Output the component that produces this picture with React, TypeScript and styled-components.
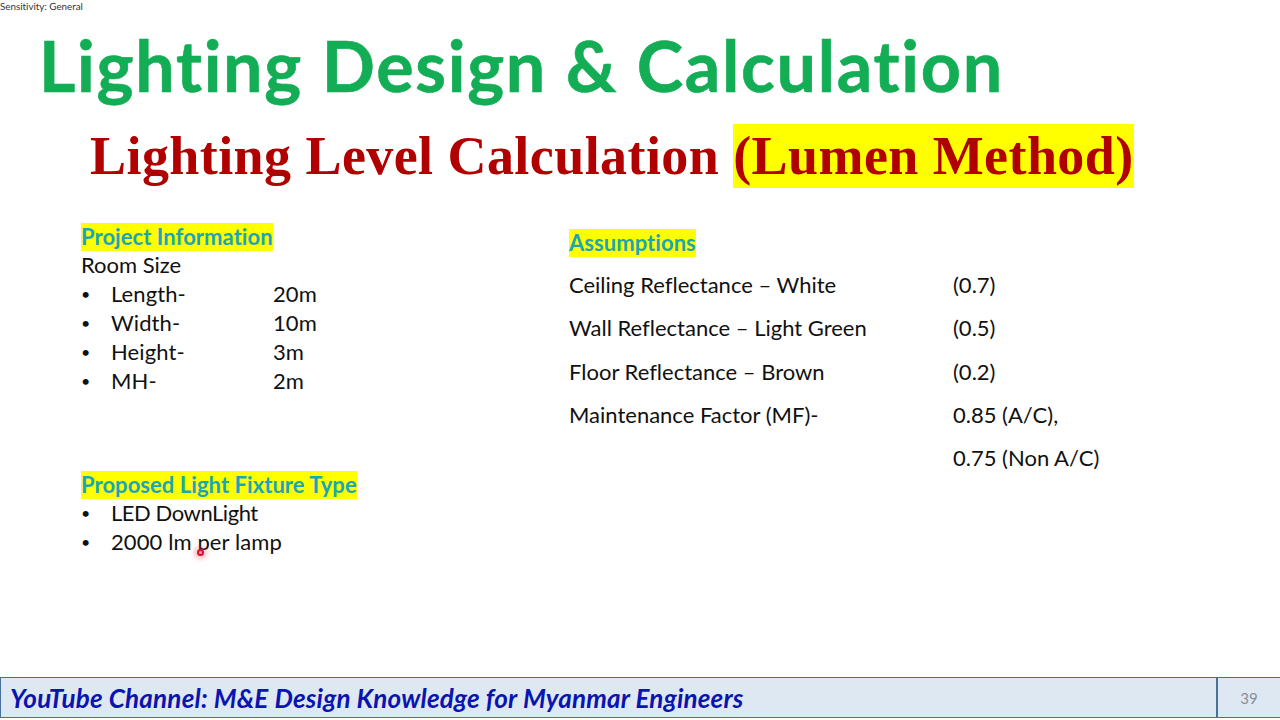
import React from "react";
import styled, { createGlobalStyle } from "styled-components";

const Global = createGlobalStyle`
  html, body { margin: 0; padding: 0; background: #fff; }
  body {
    width: 1280px;
    height: 720px;
    overflow: hidden;
    font-family: Lato, "Open Sans", sans-serif;
    font-variant-ligatures: none;
  }
`;

const Slide = styled.div`
  position: relative;
  width: 1280px;
  height: 720px;
  display: flex;
  flex-direction: column;
  background: #fff;
  color: #111;
`;

const Sensitivity = styled.div`
  height: 12px;
  font-size: 9.8px;
  line-height: 13px;
  color: #333;
`;

const Title = styled.h1`
  margin: 18px 0 0 39px;
  height: 70px;
  font-size: 70px;
  line-height: 70px;
  font-weight: 700;
  letter-spacing: 1.7px;
  -webkit-text-stroke: 0.6px #12ad55;
  color: #12ad55;
  white-space: nowrap;
`;

const Subtitle = styled.h2`
  margin: 24px 0 0 90px;
  height: 64px;
  display: flex;
  font-family: "Liberation Serif", serif;
  font-size: 54px;
  line-height: 64px;
  font-weight: 700;
  letter-spacing: 0.43px;
  color: #b00000;
  white-space: pre;
`;

const Highlight = styled.span`
  background: #ffff00;
`;

const Columns = styled.div`
  display: flex;
  margin: 35px 0 0 81px;
  flex: 1;
  min-height: 0;
`;

const LeftColumn = styled.div`
  width: 488px;
  display: flex;
  flex-direction: column;
`;

const RightColumn = styled.div`
  display: flex;
  flex-direction: column;
  padding-top: 6px;
`;

const Heading = styled.div`
  align-self: flex-start;
  height: 28px;
  line-height: 27px;
  font-size: 22px;
  font-weight: 700;
  letter-spacing: 0.05px;
  color: #1aa6b6;
  background: #ffff00;
  white-space: nowrap;
`;

const Plain = styled.div`
  font-size: 22px;
  height: 29px;
  line-height: 28px;
`;

const BulletList = styled.ul<{ $gap?: number }>`
  list-style: none;
  margin: 0 0 ${(p) => p.$gap ?? 0}px;
  padding: 0;
`;

const BulletRow = styled.li`
  display: flex;
  font-size: 22px;
  height: 29px;
  line-height: 28px;
  letter-spacing: 0.1px;
  white-space: nowrap;
`;

const Dot = styled.span`
  width: 30px;
  font-size: 16px;
`;

const Label = styled.span`
  width: 162px;
`;

const FixtureName = styled.span<{ $tight?: boolean }>`
  letter-spacing: ${(p) => (p.$tight ? "-0.45px" : "0.1px")};
`;

const AssumptionList = styled.div`
  display: flex;
  flex-direction: column;
  margin-top: 6px;
`;

const AssumptionRow = styled.div`
  display: flex;
  height: 43.3px;
  line-height: 43.3px;
  font-size: 22px;
  white-space: nowrap;
`;

const AssumptionName = styled.span`
  width: 384px;
`;

const Footer = styled.footer`
  margin-bottom: 2px;
  height: 41px;
  box-sizing: border-box;
  display: flex;
  align-items: center;
  background: #dee8f3;
  border: 1px solid #47709c;
  border-right: none;
`;

const Channel = styled.div`
  flex: 1;
  padding-left: 9px;
  font-size: 26px;
  font-weight: 700;
  font-style: italic;
  letter-spacing: 0.2px;
  color: #0a14b0;
  white-space: nowrap;
`;

const PageNumber = styled.div`
  width: 62px;
  height: 100%;
  display: flex;
  align-items: center;
  justify-content: center;
  border-left: 2px solid #47709c;
  font-size: 15px;
  color: #8a8f96;
`;

const Pointer = styled.div`
  position: absolute;
  left: 197px;
  top: 549px;
  width: 7px;
  height: 7px;
  box-sizing: border-box;
  border-radius: 50%;
  border: 2px solid #d81030;
  background: #f7a0a8;
  box-shadow: 0 0 5px 3px rgba(240, 60, 80, 0.35);
`;

const info = [["Length-", "20m"], ["Width-", "10m"], ["Height-", "3m"], ["MH-", "2m"]];
const fixtures = [
  { name: "LED DownLight", tight: true },
  { name: "2000 lm per lamp", tight: false },
];
const assumptions = [
  ["Ceiling Reflectance – White", "(0.7)"],
  ["Wall Reflectance – Light Green", "(0.5)"],
  ["Floor Reflectance – Brown", "(0.2)"],
  ["Maintenance Factor (MF)-", "0.85 (A/C),"],
  ["", "0.75 (Non A/C)"],
];

export default function App() {
  return (
    <Slide>
      <Global />
      <Sensitivity>Sensitivity: General</Sensitivity>
      <Title>Lighting Design &amp; Calculation</Title>
      <Subtitle>Lighting Level Calculation <Highlight>(Lumen Method)</Highlight></Subtitle>
      <Columns>
        <LeftColumn>
          <Heading>Project Information</Heading>
          <Plain>Room Size</Plain>
          <BulletList $gap={75}>
            {info.map(([a, b]) => (
              <BulletRow key={a}><Dot>•</Dot><Label>{a}</Label><span>{b}</span></BulletRow>
            ))}
          </BulletList>
          <Heading>Proposed Light Fixture Type</Heading>
          <BulletList>
            {fixtures.map((f) => (
              <BulletRow key={f.name}><Dot>•</Dot><FixtureName $tight={f.tight}>{f.name}</FixtureName></BulletRow>
            ))}
          </BulletList>
        </LeftColumn>
        <RightColumn>
          <Heading>Assumptions</Heading>
          <AssumptionList>
            {assumptions.map(([a, b]) => (
              <AssumptionRow key={b}><AssumptionName>{a}</AssumptionName><span>{b}</span></AssumptionRow>
            ))}
          </AssumptionList>
        </RightColumn>
      </Columns>
      <Footer>
        <Channel>YouTube Channel: M&amp;E Design Knowledge for Myanmar Engineers</Channel>
        <PageNumber>39</PageNumber>
      </Footer>
      <Pointer />
    </Slide>
  );
}
